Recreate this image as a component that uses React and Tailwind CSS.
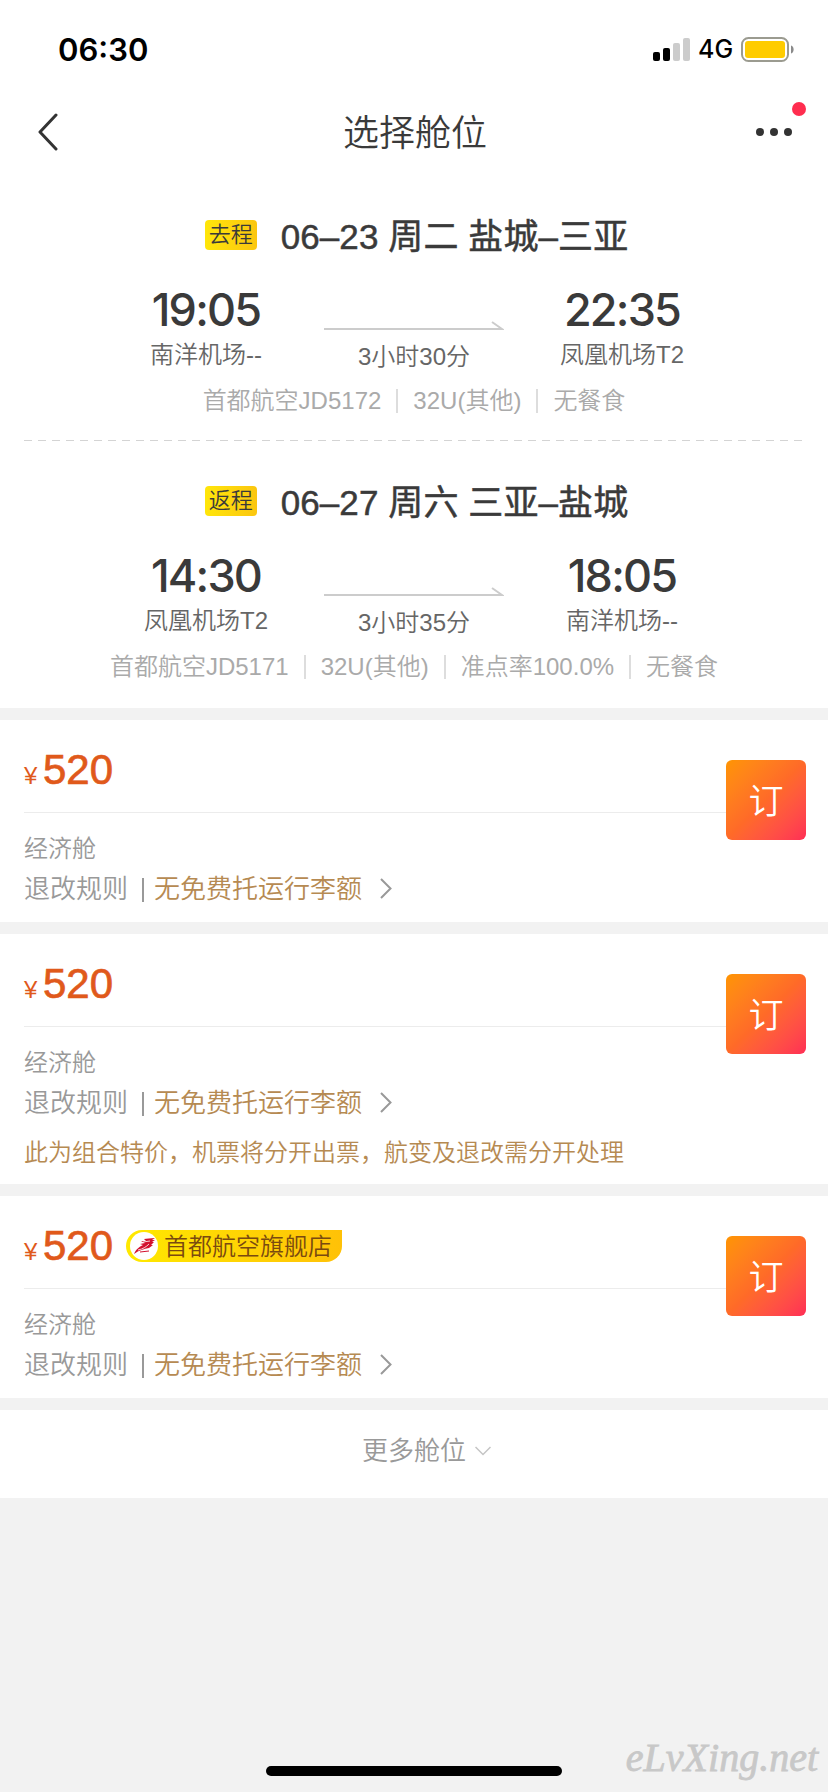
const flights = [
  {
    tag: "去程",
    title: "06–23 周二 盐城–三亚",
    depTime: "19:05",
    depPort: "南洋机场--",
    duration: "3小时30分",
    arrTime: "22:35",
    arrPort: "凤凰机场T2",
    info: ["首都航空JD5172", "32U(其他)", "无餐食"],
  },
  {
    tag: "返程",
    title: "06–27 周六 三亚–盐城",
    depTime: "14:30",
    depPort: "凤凰机场T2",
    duration: "3小时35分",
    arrTime: "18:05",
    arrPort: "南洋机场--",
    info: ["首都航空JD5171", "32U(其他)", "准点率100.0%", "无餐食"],
  },
];

const cabins = [
  { id: 1, price: 520 },
  { id: 2, price: 520, note: "此为组合特价，机票将分开出票，航变及退改需分开处理" },
  { id: 3, price: 520, shop: "首都航空旗舰店" },
];

function StatusBar() {
  return (
    <div className="flex h-[88px] items-center justify-between pt-[11px] pr-[33px] pl-[58px] text-black">
      <span className="font-[Inter] text-[31px] leading-none font-semibold">06:30</span>
      <div className="flex items-center">
        <svg width="38" height="24" viewBox="0 0 38 24">
          <rect x="0" y="14" width="7" height="9" rx="2" fill="#000" />
          <rect x="10" y="10" width="7" height="13" rx="2" fill="#000" />
          <rect x="20" y="5" width="7" height="18" rx="2" fill="#ccc" />
          <rect x="30" y="0" width="7" height="23" rx="2" fill="#ccc" />
        </svg>
        <span className="ml-[7px] w-9 font-[Inter] text-[25px] leading-none font-medium">4G</span>
        <svg className="ml-[7px]" width="54" height="26" viewBox="0 0 54 26">
          <rect x="1" y="1" width="46" height="23" rx="6.5" fill="none" stroke="#9b9b90" strokeWidth="2" />
          <rect x="4" y="4" width="40" height="17" rx="3" fill="#ffcc00" />
          <path d="M50 8.5c3.5 1 3.5 7 0 8z" fill="#8a8a8a" />
        </svg>
      </div>
    </div>
  );
}

function Header() {
  return (
    <div className="flex h-[88px] items-center justify-between pr-9 pl-[37px]">
      <svg width="22" height="38" viewBox="0 0 22 38" fill="none" stroke="#333" strokeWidth="3" strokeLinecap="round" strokeLinejoin="round">
        <path d="M19 2 3 19l16 17" />
      </svg>
      <h1 className="pt-1 pl-[15px] text-[36px] leading-none">选择舱位</h1>
      <div className="relative flex gap-1.5">
        <i className="size-2 rounded-full bg-[#333]" />
        <i className="size-2 rounded-full bg-[#333]" />
        <i className="size-2 rounded-full bg-[#333]" />
        <i className="absolute -top-[26px] -right-[14px] size-3.5 rounded-full bg-[#ff2d4f]" />
      </div>
    </div>
  );
}

function Stop({ time, port }) {
  return (
    <div className="w-[236px] text-center">
      <div className="pt-0.5 font-[Inter] text-[45px] leading-[54px] font-medium tracking-[-1.8px]">{time}</div>
      <div className="mt-0.5 text-[24px] leading-8 text-[#666]">{port}</div>
    </div>
  );
}

function Flight({ flight }) {
  return (
    <div className="flex h-[225px] flex-col items-center">
      <div className="flex h-10 items-center pl-[5px]">
        <span className="flex h-[30px] w-[52px] items-center justify-center rounded-sm bg-linear-to-r from-[#ffe60a] to-[#fbc60f] text-[22px] leading-none">
          {flight.tag}
        </span>
        <span className="ml-6 pt-[3px] text-[35px] leading-10 font-normal tracking-[0.1px] [-webkit-text-stroke:0.5px_#3a3a3a]">
          {flight.title}
        </span>
      </div>

      <div className="mt-[26px] flex h-[92px] w-full justify-center">
        <Stop time={flight.depTime} port={flight.depPort} />
        <div className="flex w-[180px] flex-col items-center pt-[38px]">
          <svg className="shrink-0" width="180" height="12" viewBox="0 0 180 12" fill="none" stroke="#ccc" strokeWidth="2">
            <path d="M0 10h178l-10-7" />
          </svg>
          <div className="mt-2.5 text-[24px] leading-8 text-[#666]">{flight.duration}</div>
        </div>
        <Stop time={flight.arrTime} port={flight.arrPort} />
      </div>

      <div className="mt-3 flex h-8 items-center text-[24px] leading-8 text-[#aaa]">
        {flight.info.map((item, i) => (
          <span key={item} className={i > 0 ? "ml-[15px] flex items-center" : "flex items-center"}>
            {i > 0 && <i className="mr-[15px] h-6 w-0.5 bg-[#ddd]" />}
            {item}
          </span>
        ))}
      </div>
    </div>
  );
}

function ShopBadge({ name }) {
  return (
    <div className="ml-3 flex h-8 w-[216px] items-center rounded-l-2xl rounded-br-2xl bg-linear-to-r from-[#ffe900] to-[#ffc107] pl-1 text-[24px] leading-8 text-[#7a4a10]">
      <svg className="mr-1.5 shrink-0" width="28" height="28" viewBox="0 0 28 28">
        <circle cx="14" cy="14" r="14" fill="#fff" />
        <path d="M4 22c2-5 5-7 9-9l-3-1 5-1-4-2 5 0-2-2c3 0 6-1 11-1l-3 2h3l-3 2h2l-3 3h2l-4 3c-5 1-10 2-15 6z" fill="#d3122f" />
        <path d="M8 18c5-1 8-3 11-6M13 10l7-1" stroke="#fff" strokeWidth="0.8" fill="none" />
        <path d="m10 20 9-1" stroke="#d3122f" fill="none" />
      </svg>
      <span className="pt-0.5">{name}</span>
    </div>
  );
}

function Cabin({ cabin }) {
  return (
    <div className="relative mt-3 bg-white pb-[13px] pl-6">
      <div className="mr-[22px] flex h-[93px] items-center border-b border-[#ececec] pt-2">
        <span className="flex w-[90px] items-baseline text-[#e0591b]">
          <span className="w-[19px] pb-1 text-[24px] leading-none">¥</span>
          <span className="text-[42px] leading-none [-webkit-text-stroke:0.7px_#e0591b]">{cabin.price}</span>
        </span>
        {cabin.shop && <ShopBadge name={cabin.shop} />}
      </div>
      <div className="pt-[18px] text-[24px] leading-9 text-[#999]">经济舱</div>
      <div className="mt-[3px] flex h-[39px] items-center text-[26px] leading-[39px] text-[#999]">
        退改规则
        <i className="mr-2.5 ml-3.5 h-6 w-0.5 bg-[#999]" />
        <span className="text-[#b68a52]">无免费托运行李额</span>
        <svg className="mb-0.5 ml-[18px]" width="12" height="21" viewBox="0 0 12 21" fill="none" stroke="#999" strokeWidth="2">
          <path d="m1 1 9.5 9.5L1 20" />
        </svg>
      </div>
      {cabin.note && <div className="mt-3 text-[24px] leading-9 text-[#b68a52]">{cabin.note}</div>}
      <button className="absolute top-10 right-[22px] size-20 rounded-md bg-linear-to-br from-[#ff9500] via-[#ff6a28] to-[#ff2d55] pt-0.5 text-[35px] leading-none text-white">
        订
      </button>
    </div>
  );
}

export default function App() {
  return (
    <div className="relative flex h-[1792px] w-[828px] flex-col bg-[#f2f2f2] font-['Liberation_Sans','Noto_Sans_CJK_SC',sans-serif] font-[350] text-[#3a3a3a]">
      <div className="h-[708px] bg-white">
        <StatusBar />
        <Header />
        <div className="pt-[39px]">
          <Flight flight={flights[0]} />
          <div className="mx-6 mb-10 h-px bg-[repeating-linear-gradient(to_right,#d4d4d4_0_8px,transparent_8px_14px)]" />
          <Flight flight={flights[1]} />
        </div>
      </div>

      {cabins.map((c) => (
        <Cabin key={c.id} cabin={c} />
      ))}

      <div className="mt-3 flex h-[88px] items-center justify-center bg-white pb-1.5 text-[26px] text-[#999]">
        更多舱位
        <svg className="-mr-[25px] ml-[9px]" width="16" height="10" viewBox="0 0 16 10" fill="none" stroke="#c4c4c4" strokeWidth="1.5">
          <path d="m.5 1 7.5 7.5L15.5 1" />
        </svg>
      </div>

      <div className="mt-auto mb-4 h-2.5 w-[296px] self-center rounded-full bg-black" />
      <span className="absolute right-2.5 bottom-3.5 font-['Liberation_Serif',serif] text-[40px] leading-none text-[#c8c8c8] italic [-webkit-text-stroke:0.8px_#c8c8c8]">
        eLvXing.net
      </span>
    </div>
  );
}
